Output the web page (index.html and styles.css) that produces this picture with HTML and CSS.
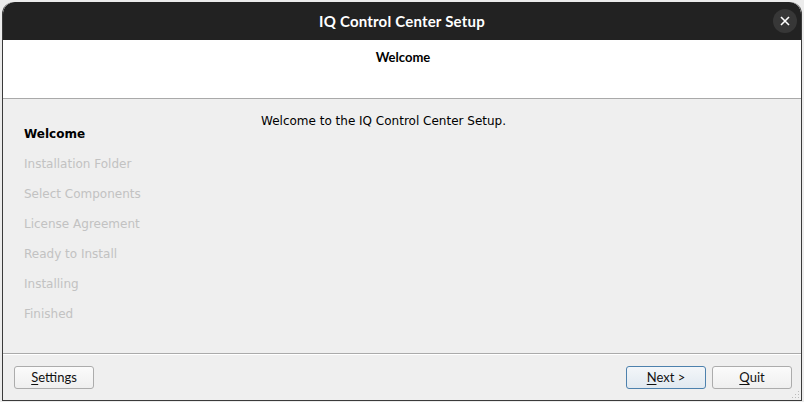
FILE: index.html
```html
<!DOCTYPE html>
<html>
<head>
<meta charset="utf-8">
<link rel="stylesheet" href="styles.css">
</head>
<body>
<div class="window">
  <div class="titlebar">
    <span class="title">IQ Control Center Setup</span>
    <span class="close"><svg width="10" height="10" viewBox="0 0 10 10"><path d="M1 1L9 9M9 1L1 9" stroke="#fff" stroke-width="1.6"/></svg></span>
  </div>
  <div class="header"><span class="header-title">Welcome</span></div>
  <div class="content">
    <ul class="steps">
      <li class="step active">Welcome</li>
      <li class="step">Installation Folder</li>
      <li class="step">Select Components</li>
      <li class="step">License Agreement</li>
      <li class="step">Ready to Install</li>
      <li class="step">Installing</li>
      <li class="step">Finished</li>
    </ul>
    <div class="main">Welcome to the IQ Control Center Setup.</div>
  </div>
  <div class="footer">
    <button class="btn"><u>S</u>ettings</button>
    <div class="spacer"></div>
    <button class="btn default"><u>N</u>ext &gt;</button>
    <button class="btn"><u>Q</u>uit</button>
    <svg class="grip" width="8" height="8" viewBox="0 0 8 8"><g fill="#bbb"><rect x="6" y="0" width="1" height="1"/><rect x="3" y="3" width="1" height="1"/><rect x="6" y="3" width="1" height="1"/><rect x="0" y="6" width="1" height="1"/><rect x="3" y="6" width="1" height="1"/><rect x="6" y="6" width="1" height="1"/></g></svg>
  </div>
</div>
</body>
</html>
```
FILE: styles.css
```css
html, body {
  margin: 0;
  padding: 0;
}
body {
  background: #ececec;
  width: 804px;
  height: 402px;
  overflow: hidden;
  padding-top: 2px;
  box-sizing: border-box;
}
.window {
  margin: 0 2px;
  width: 800px;
  height: 399px;
  box-sizing: border-box;
  border: 1px solid #3a3a3a;
  border-top: none;
  border-radius: 12px 12px 0 0;
  background: #efefef;
  display: flex;
  flex-direction: column;
  overflow: hidden;
  position: relative;
}
.titlebar {
  height: 38px;
  flex: none;
  background: #222222;
  border-radius: 12px 12px 0 0;
  display: flex;
  align-items: center;
  justify-content: center;
  position: relative;
}
.title {
  font-family: "Lato", "Open Sans", sans-serif;
  font-weight: bold;
  font-size: 15px;
  color: #ffffff;
  letter-spacing: 0.2px;
}
.close {
  position: absolute;
  right: 4px;
  top: 7px;
  width: 24px;
  height: 24px;
  border-radius: 50%;
  background: #373737;
  display: flex;
  align-items: center;
  justify-content: center;
}
.header {
  height: 58px;
  flex: none;
  background: #ffffff;
  border-bottom: 1px solid #a9a9a9;
  display: flex;
  justify-content: center;
}
.header-title {
  font-family: "Lato", "Open Sans", sans-serif;
  font-weight: bold;
  font-size: 13px;
  color: #000;
  margin-top: 9px;
  line-height: 16px;
  margin-left: 2px;
}
.content {
  flex: 1;
  display: flex;
  border-bottom: 1px solid #aaaaaa;
  box-shadow: 0 1px 0 #ffffff;
}
.steps {
  list-style: none;
  margin: 0;
  padding: 20px 0 0 21px;
  width: 237px;
  flex: none;
}
.step {
  font-family: "DejaVu Sans", sans-serif;
  font-size: 12px;
  line-height: 30px;
  height: 30px;
  color: #c2c2c2;
}
.step.active {
  color: #000;
  font-weight: bold;
}
.main {
  font-family: "DejaVu Sans", sans-serif;
  font-size: 12px;
  color: #000;
  padding-top: 14px;
  line-height: 16px;
}
.footer {
  height: 45px;
  flex: none;
  margin-top: 1px;
  display: flex;
  align-items: flex-start;
  padding: 11px 9px 0 11px;
  box-sizing: border-box;
  gap: 6px;
  position: relative;
}
.spacer { flex: 1; }
.btn {
  width: 80px;
  height: 23px;
  box-sizing: border-box;
  border: 1px solid #acacac;
  border-radius: 3px;
  background: linear-gradient(#fbfbfb, #efefef);
  font-family: "Lato", "Open Sans", sans-serif;
  font-size: 13px;
  color: #111;
  padding: 0 0 1px 0;
  line-height: 19px;
  margin: 0;
}
.btn.default {
  border-color: #4d81ad;
  background: linear-gradient(#f3f6f9, #e1e9f0);
}
.btn u {
  text-underline-offset: 2px;
}
.grip {
  position: absolute;
  right: 1px;
  bottom: 1px;
}
```
